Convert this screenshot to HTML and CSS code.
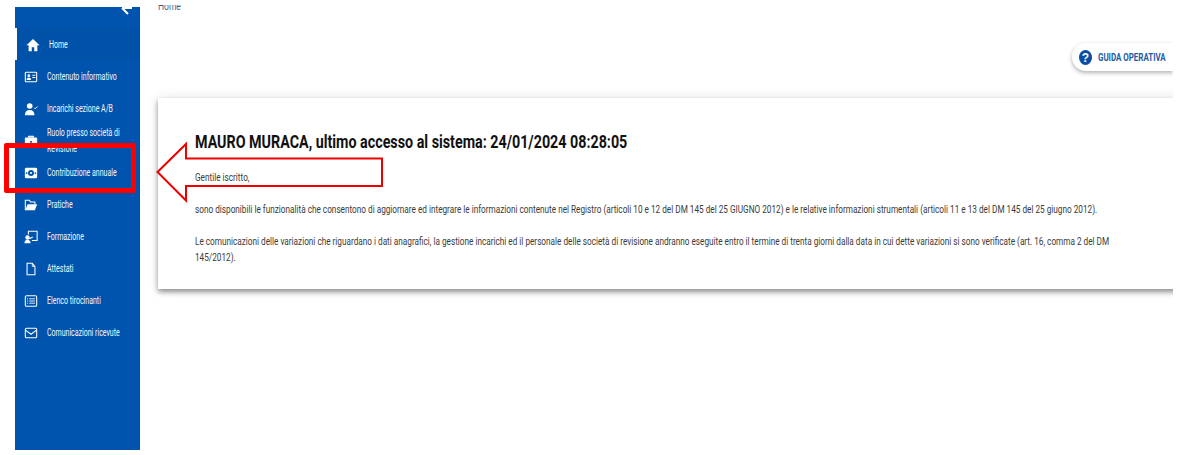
FILE: index.html
```html
<!DOCTYPE html>
<html lang="it">
<head>
<meta charset="utf-8">
<title>Home</title>
<link rel="stylesheet" href="styles.css">
</head>
<body>
<div class="page">
  <aside class="sidebar">
    <div class="collapse"><svg width="14" height="14" viewBox="0 0 14 14"><path d="M2 1L8 7M2 1H12" fill="none" stroke="#fff" stroke-width="2"/></svg></div>
    <nav class="menu">
      <a class="item active"><svg class="ico ico-home" viewBox="0 0 16 16"><path d="M8 1L0.500 8.300H3V15h3.600v-4.400h2.800V15H13V8.300h2.500z" fill="#fff"/></svg><span class="home-label">Home</span></a>
      <a class="item"><svg class="ico" viewBox="0 0 16 16"><rect x="1.500" y="2.500" width="13" height="11" rx="1" fill="none" stroke="#fff" stroke-width="1.200"/><circle cx="5.500" cy="6.500" r="1.600" fill="#fff"/><path d="M3 11.500c0-2 1-2.800 2.500-2.800S8 9.500 8 11.500z" fill="#fff"/><path d="M9.500 6h3.500M9.500 8.500h3.500" stroke="#fff" stroke-width="1.200"/></svg><span>Contenuto informativo</span></a>
      <a class="item"><svg class="ico" viewBox="0 0 16 16"><circle cx="6.500" cy="4.500" r="3.200" fill="#fff"/><path d="M1 15c0-4 2.200-6 5.500-6s5.500 2 5.500 6z" fill="#fff"/><path d="M11.500 6.500l1.300 1.300 2.500-2.800" fill="none" stroke="#fff"/></svg><span>Incarichi sezione A/B</span></a>
      <a class="item"><svg class="ico" viewBox="0 0 16 16"><path d="M5 4V2.500h6V4M1.500 4.500h13V14h-13z" fill="#fff" stroke="#fff"/><rect x="7" y="8" width="2" height="2" fill="#0054ae"/></svg><span class="wrap">Ruolo presso società di Revisione</span></a>
      <a class="item"><svg class="ico" viewBox="0 0 16 16"><rect x="1" y="2" width="14" height="12" rx="1.500" fill="#fff"/><circle cx="8" cy="8" r="3.400" fill="#0054ae"/><circle cx="8" cy="8" r="1.200" fill="#fff"/><circle cx="3" cy="8" r="1" fill="#0054ae"/><circle cx="13" cy="8" r="1" fill="#0054ae"/></svg><span>Contribuzione annuale</span></a>
      <a class="item"><svg class="ico" viewBox="0 0 16 16"><path d="M1.500 14V2.500h4.500l1.500 2h5V7" fill="none" stroke="#fff" stroke-width="1.200"/><path d="M1.500 14L4 7h11l-2.500 7z" fill="#fff"/></svg><span>Pratiche</span></a>
      <a class="item"><svg class="ico" viewBox="0 0 16 16"><path d="M5 5V1.500h10V12H9" fill="none" stroke="#fff" stroke-width="1.200"/><circle cx="4" cy="8.500" r="2.500" fill="#fff"/><path d="M0.500 15c0-2.500 1.200-4 3.500-4s3.500 1.500 3.500 4z" fill="#fff"/><path d="M6 10l4-2" stroke="#fff" stroke-width="1.200"/></svg><span>Formazione</span></a>
      <a class="item"><svg class="ico" viewBox="0 0 16 16"><path d="M3.500 1.500h6l3 3.500v9.500h-9z" fill="none" stroke="#fff" stroke-width="1.200"/><path d="M9.500 1.500V5h3" fill="none" stroke="#fff"/></svg><span>Attestati</span></a>
      <a class="item"><svg class="ico" viewBox="0 0 16 16"><rect x="1.500" y="2" width="13" height="12" rx="1.500" fill="none" stroke="#fff" stroke-width="1.200"/><path d="M3.500 5.500h1.200M6 5.500h6.500M3.500 8h1.200M6 8h6.500M3.500 10.500h1.200M6 10.500h6.500" stroke="#fff"/></svg><span>Elenco tirocinanti</span></a>
      <a class="item"><svg class="ico" viewBox="0 0 16 16"><rect x="1.500" y="2.500" width="13" height="11" rx="1.500" fill="none" stroke="#fff" stroke-width="1.200"/><path d="M2 5l6 4.500L14 5" fill="none" stroke="#fff" stroke-width="1.400"/></svg><span>Comunicazioni ricevute</span></a>
    </nav>
  </aside>
  <main class="main">
    <div class="crumb">Home</div>
    <div class="guide-row">
      <a class="guide"><svg class="guide-ico" viewBox="0 0 13 15"><ellipse cx="6.500" cy="7.500" rx="6.500" ry="7.500" fill="#0a4da2"/><text x="6.500" y="12" text-anchor="middle" class="guide-q">?</text></svg><span class="guide-label">GUIDA OPERATIVA</span></a>
    </div>
    <section class="card">
      <h1>MAURO MURACA, ultimo accesso al sistema: 24/01/2024 08:28:05</h1>
      <p class="greet">Gentile iscritto,</p>
      <p class="p1">sono disponibili le funzionalità che consentono di aggiornare ed integrare le informazioni contenute nel Registro (articoli 10 e 12 del DM 145 del 25 GIUGNO 2012) e le relative informazioni strumentali (articoli 11 e 13 del DM 145 del 25 giugno 2012).</p>
      <p class="p2">Le comunicazioni delle variazioni che riguardano i dati anagrafici, la gestione incarichi ed il personale delle società di revisione andranno eseguite entro il termine di trenta giorni dalla data in cui dette variazioni si sono verificate (art. 16, comma 2 del DM 145/2012).</p>
    </section>
  </main>
</div>
<div class="redbox"></div>
<svg class="arrow" width="230" height="64" viewBox="0 0 230 64"><path d="M1.500 32L30 4v14.500h196V46H30v14.500z" fill="none" stroke="#ee0000" stroke-width="2"/></svg>
</body>
</html>
```
FILE: styles.css
```css
* { box-sizing: border-box; }
html, body { margin: 0; height: 100%; background: #fff; overflow: hidden; }
body { font-family: "Roboto", "Liberation Sans", sans-serif; position: relative; }
.page { display: flex; height: 450px; padding-left: 15px; padding-right: 8px; }
.sidebar { width: 125px; flex: none; margin-top: 7px; background: #0054ae; color: #fff; }
.collapse { height: 21px; display: flex; justify-content: flex-end; padding-right: 6px; align-items: flex-start; }
.menu { display: flex; flex-direction: column; }
.item { height: 32px; display: flex; align-items: center; padding: 2px 0 0 9px; gap: 9px; font-size: 10px; line-height: 16px; color: #f2f6fb; }
.item span { display: block; flex: none; width: 150px; white-space: nowrap; transform: scaleX(.7); transform-origin: left center; }
.item .wrap { white-space: normal; width: 110px; }
.ico { width: 14px; height: 14px; flex: none; }
.ico-home { margin-left: 1px; }
.active { border-left: 2px solid #fff; padding-left: 8px; background: #0052a8; }
.main { flex: 1; min-width: 0; margin-top: 5px; padding-left: 18px; display: flex; flex-direction: column; overflow: hidden; }
.crumb { height: 43px; flex: none; margin-top: -5px; font-size: 10px; line-height: 12px; padding-top: 1px; color: #3c5f8f; transform: scaleX(.85); transform-origin: left center; }
.guide-row { display: flex; justify-content: flex-end; height: 55px; flex: none; }
.guide { width: 101px; height: 28px; background: #fff; border-radius: 14px 0 0 14px; box-shadow: 0 2px 4px rgba(0,0,0,.3); display: flex; align-items: center; gap: 6px; padding-left: 7px; overflow: hidden; font-size: 11px; font-weight: 700; color: #1c5ca8; }
.guide-ico { width: 13px; height: 15px; flex: none; }
.guide-q { font-size: 12px; font-weight: 700; fill: #fff; font-family: "Liberation Sans", sans-serif; }
.guide-label { display: block; flex: none; width: 110px; white-space: nowrap; transform: scaleX(.72); transform-origin: left center; }
.card { height: 191px; flex: none; margin-right: -30px; background: #fff; box-shadow: 0 3px 5px rgba(0,0,0,.4), 0 0 12px rgba(0,0,0,.1); padding: 33px 0 0 37px; color: #3b3b3b; font-size: 11px; line-height: 16px; overflow: hidden; }
.card h1 { margin: 0; font-size: 18px; line-height: 22px; font-weight: 700; color: #111; white-space: nowrap; transform: scaleX(.794); transform-origin: left center; }
.card p { margin: 0; width: 1245px; transform: scaleX(.746); transform-origin: left center; }
.card .greet { padding-top: 17px; }
.card .p1 { padding-top: 16px; }
.card .p2 { padding-top: 16px; }
.redbox { position: absolute; left: 4px; top: 143px; width: 132px; height: 50px; border: 5px solid #ff0000; border-radius: 2px; }
.arrow { position: absolute; left: 156px; top: 140px; }
```
